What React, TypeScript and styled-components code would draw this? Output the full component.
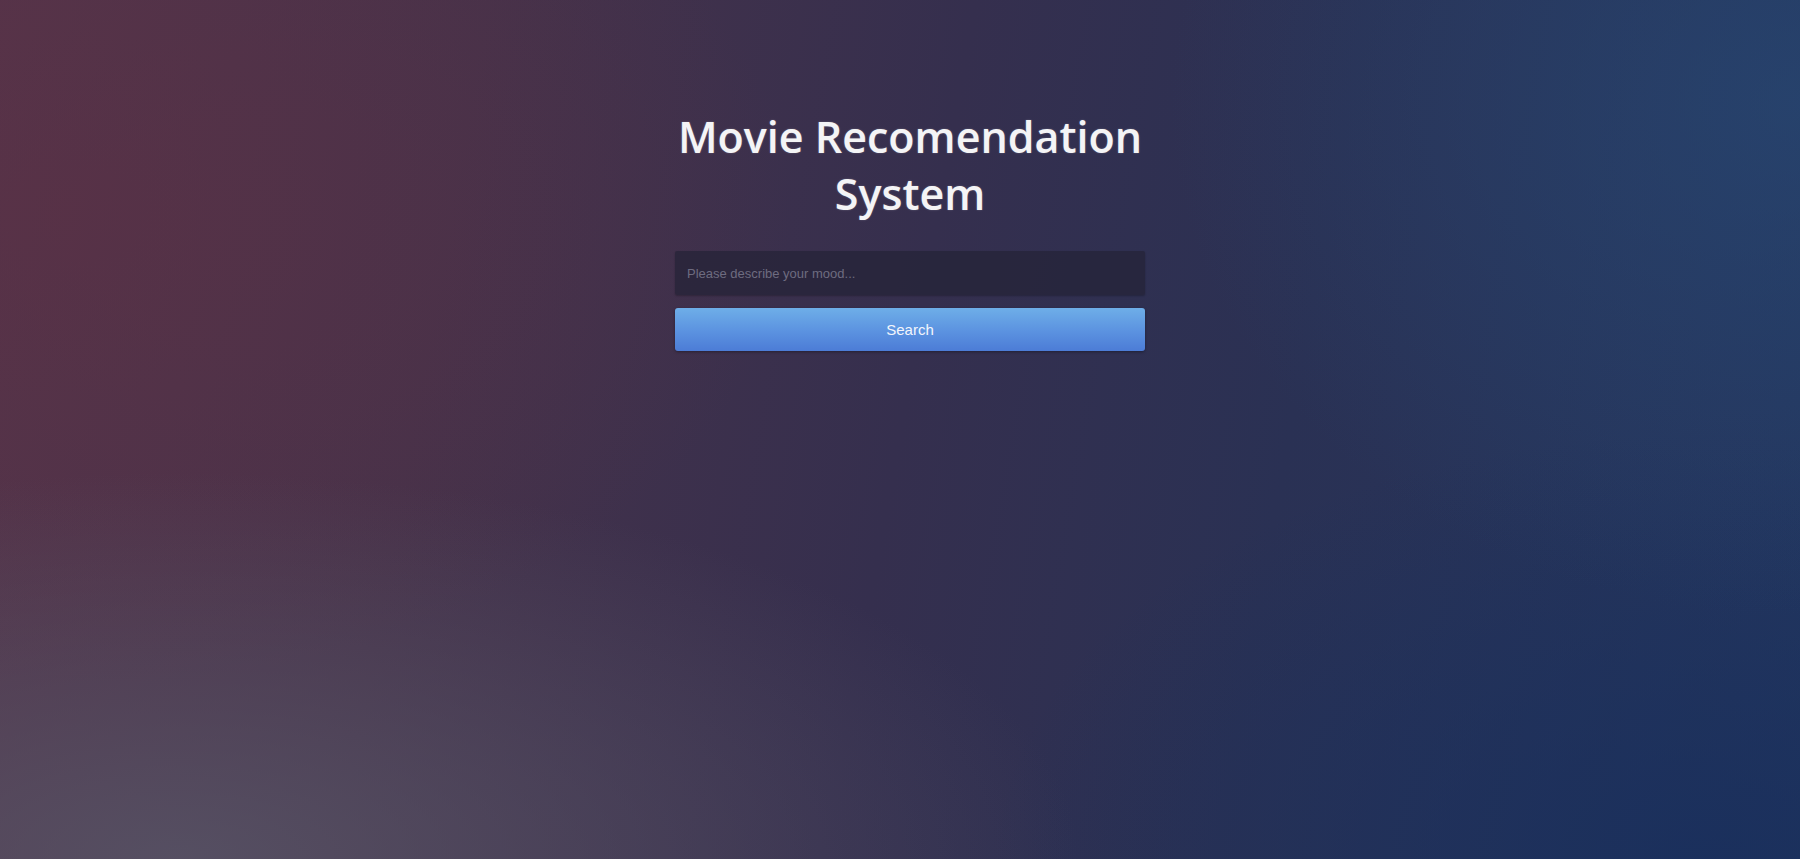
import React from "react";
import styled, { createGlobalStyle } from "styled-components";

const GlobalStyle = createGlobalStyle`
  html, body {
    margin: 0;
    padding: 0;
    height: 100%;
  }
  body {
    font-family: "Open Sans", "Liberation Sans", sans-serif;
    background: #2e2c4c;
  }
  #root {
    min-height: 100vh;
  }
`;

const Page = styled.main`
  min-height: 100vh;
  box-sizing: border-box;
  display: flex;
  flex-direction: column;
  align-items: center;
  padding: 108px 0 0 20px;
  background:
    radial-gradient(ellipse 50% 45% at 10% 100%, rgba(88, 86, 104, 0.8) 0%, rgba(88, 86, 104, 0) 100%),
    radial-gradient(ellipse 40% 55% at 4% 25%, rgba(92, 48, 68, 0.55) 0%, rgba(92, 48, 68, 0) 100%),
    radial-gradient(ellipse 35% 60% at 100% 12%, rgba(40, 74, 118, 0.6) 0%, rgba(40, 74, 118, 0) 100%),
    radial-gradient(ellipse 40% 50% at 95% 100%, rgba(24, 46, 92, 0.8) 0%, rgba(24, 46, 92, 0) 100%),
    linear-gradient(100deg, #54344a 0%, #46324a 25%, #352f4e 50%, #2a3154 70%, #233760 100%);
`;

const Panel = styled.section`
  width: 470px;
  display: flex;
  flex-direction: column;
  align-items: stretch;
`;

const Title = styled.h1`
  margin: 0 0 29px;
  font-family: "Open Sans", "Liberation Sans", sans-serif;
  font-weight: 600;
  font-size: 43px;
  line-height: 57px;
  color: #f4f4f6;
  text-align: center;
  text-shadow: 0 0 2px rgba(255, 255, 255, 0.25);
`;

const MoodInput = styled.input`
  box-sizing: border-box;
  height: 44px;
  width: 100%;
  padding: 0 12px;
  border: none;
  border-radius: 2px;
  background: rgba(36, 34, 54, 0.7);
  color: #ddd;
  font-family: "Liberation Sans", Arial, sans-serif;
  font-size: 13px;
  outline: none;
  box-shadow: 0 1px 2px rgba(0, 0, 0, 0.25);

  &::placeholder {
    color: #6e6c80;
  }
`;

const SearchButton = styled.button`
  margin-top: 13px;
  height: 43px;
  width: 100%;
  border: none;
  border-radius: 3px;
  background: linear-gradient(180deg, #6eaee8 0%, #5b92e0 55%, #4c7cd6 100%);
  color: #f3f6fc;
  font-family: "Liberation Sans", Arial, sans-serif;
  font-size: 15px;
  cursor: pointer;
  box-shadow: 0 1px 3px rgba(0, 0, 0, 0.35);
`;

export default function App() {
  return (
    <>
      <GlobalStyle />
      <Page>
        <Panel>
          <Title>Movie Recomendation System</Title>
          <MoodInput type="text" placeholder="Please describe your mood..." />
          <SearchButton type="button">Search</SearchButton>
        </Panel>
      </Page>
    </>
  );
}
